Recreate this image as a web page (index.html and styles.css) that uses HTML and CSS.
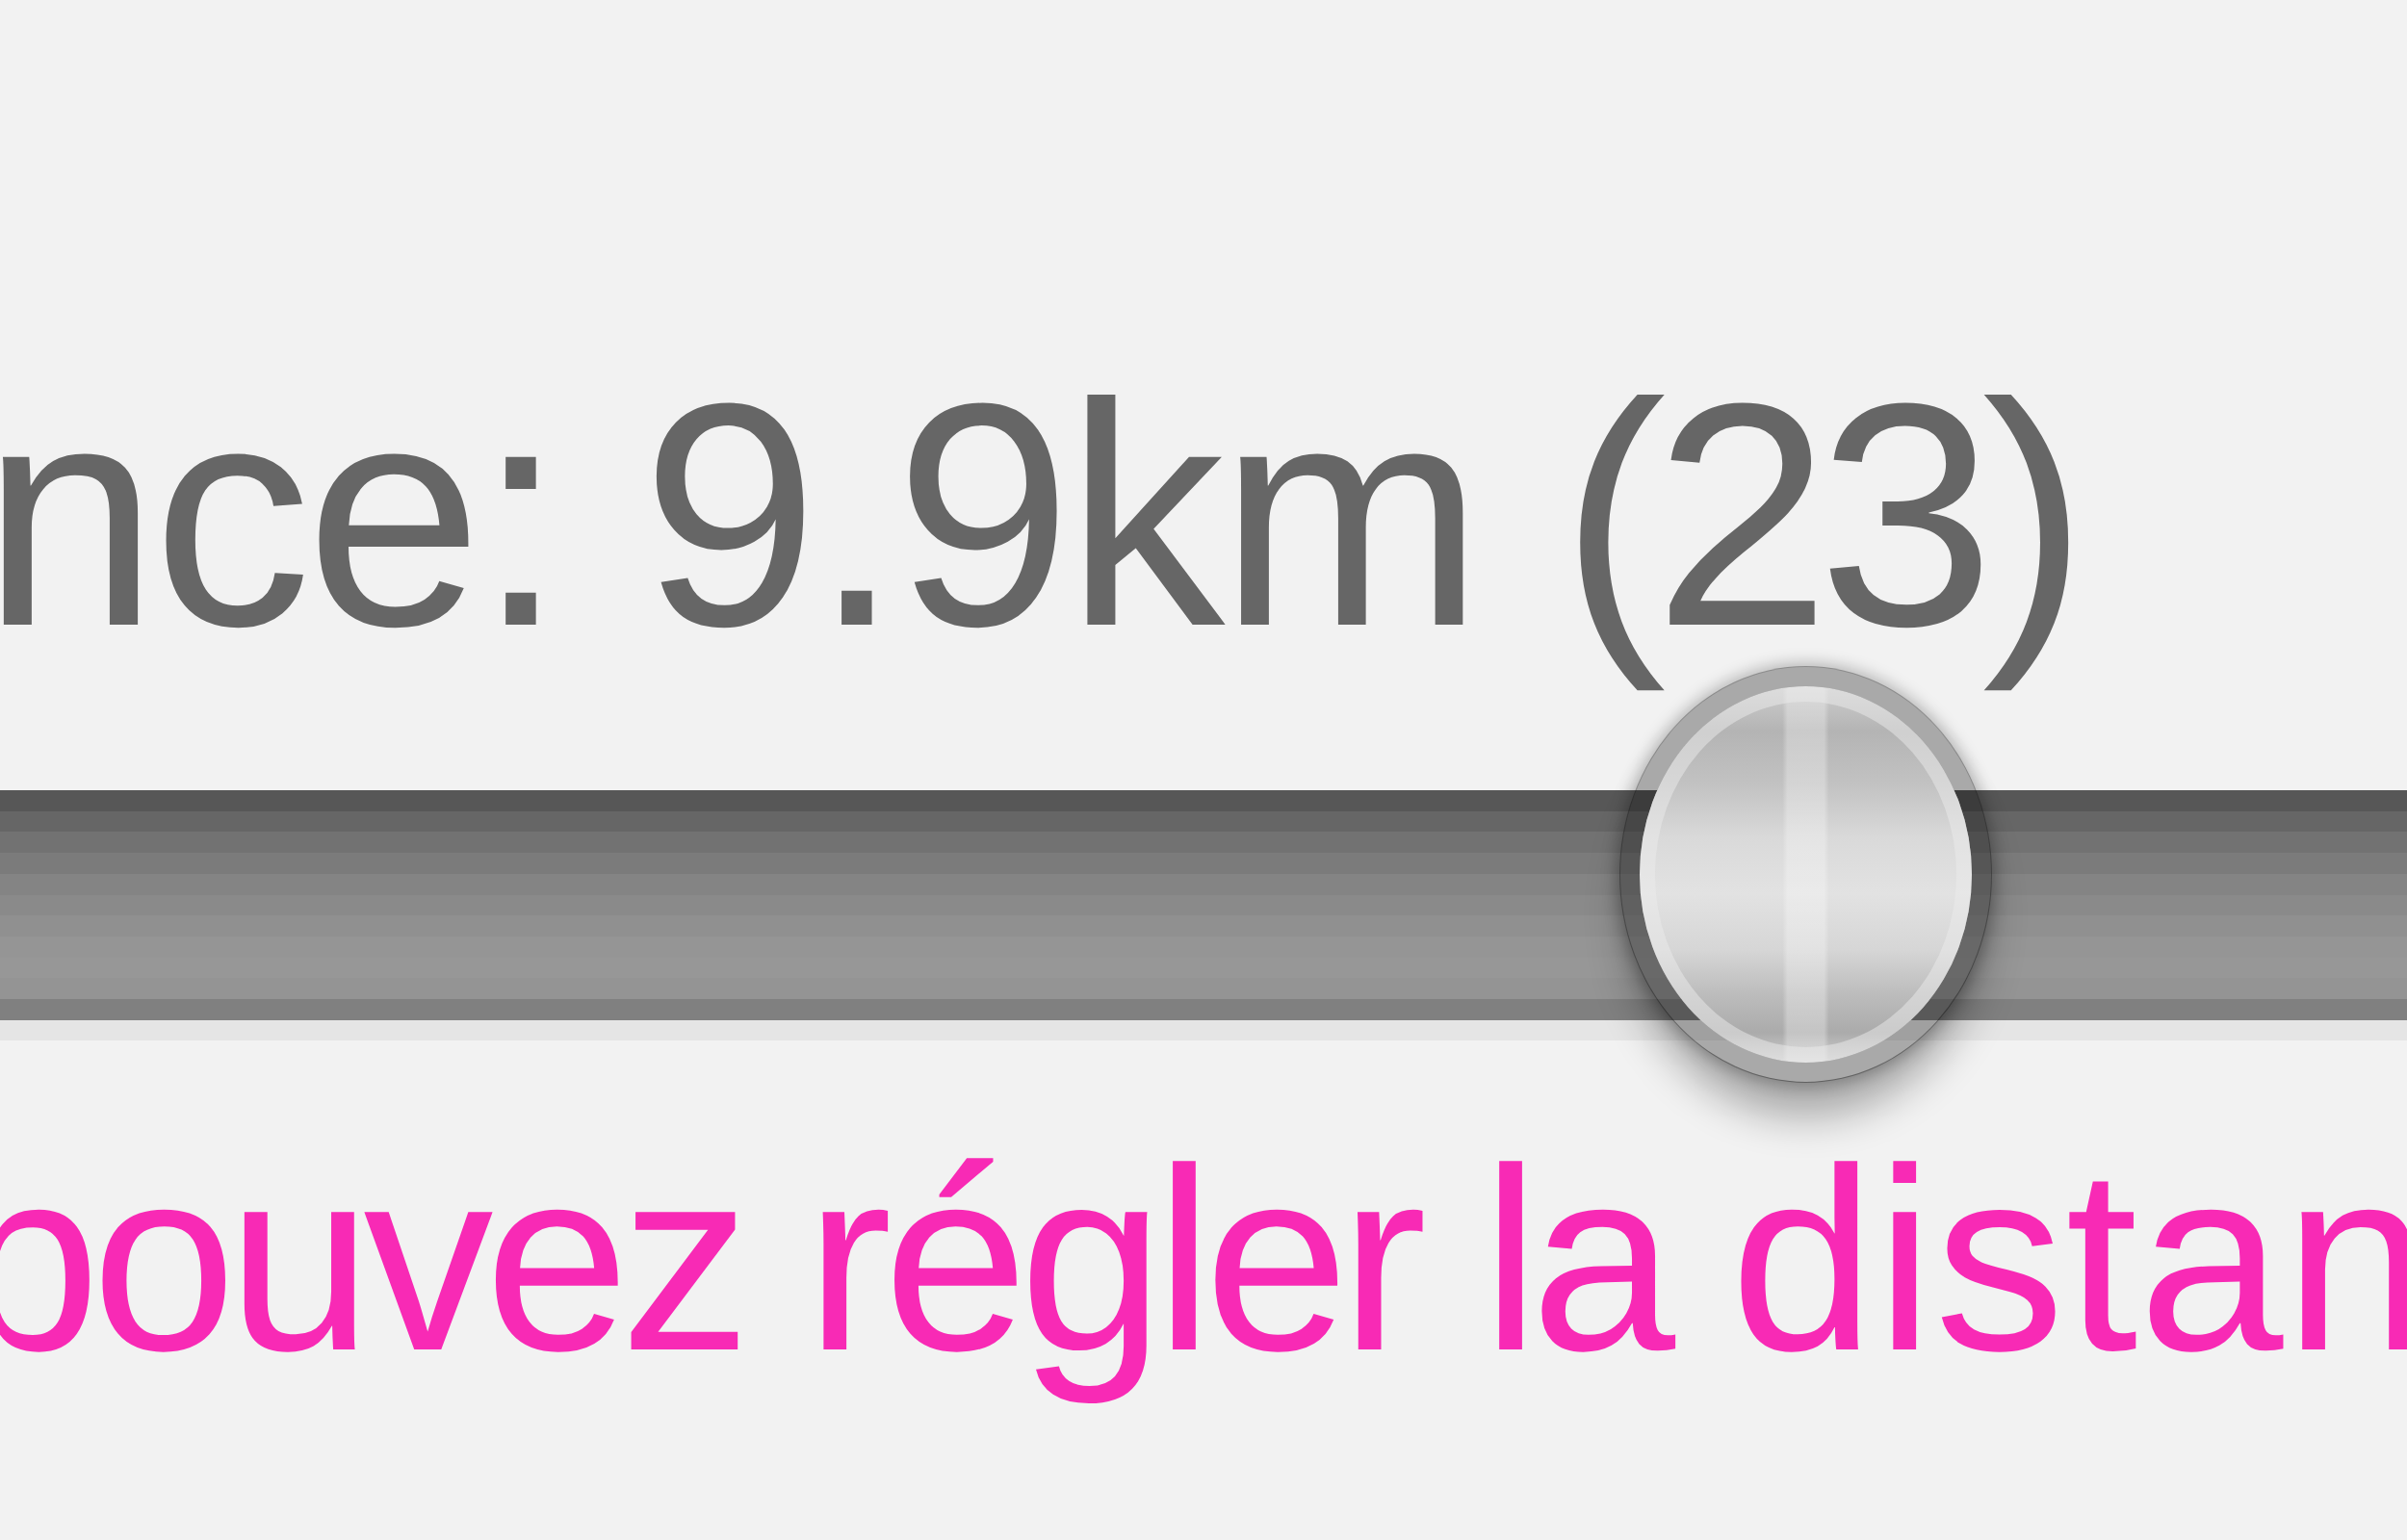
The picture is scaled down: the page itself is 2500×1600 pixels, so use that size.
FILE: index.html
```html
<!DOCTYPE html>
<html lang="fr">
<head>
<meta charset="utf-8">
<title>Distance</title>
<link rel="stylesheet" href="styles.css">
</head>
<body>
<div class="zoom">
  <div class="label">nce: 9.9km <span class="count">(23)</span></div>
  <div class="slider">
    <div class="thumb"></div>
  </div>
  <div class="hint">pouvez régler la <span class="wide">distan</span></div>
</div>
</body>
</html>
```
FILE: styles.css
```css
html, body {
  margin: 0;
  padding: 0;
}
body {
  width: 2500px;
  height: 1600px;
  overflow: hidden;
  background: #f2f2f2;
  font-family: "Liberation Sans", Arial, sans-serif;
}
.zoom {
  display: flex;
  flex-direction: column;
  width: 2500px;
  height: 1600px;
  overflow: hidden;
}
.label {
  margin: 370px 0 0 -19px;
  font-size: 330px;
  line-height: 330px;
  letter-spacing: -6px;
  color: #666;
  white-space: nowrap;
}
.count {
  letter-spacing: -13px;
}
.slider {
  position: relative;
  margin-top: 121px;
  height: 239px;
  border-bottom: 21px solid #e5e5e5;
  background: linear-gradient(180deg,
    #575757 0, #575757 21.7px,
    #666666 21.7px, #666666 43.4px,
    #727272 43.4px, #727272 65.1px,
    #7b7b7b 65.1px, #7b7b7b 86.8px,
    #848484 86.8px, #848484 108.5px,
    #8a8a8a 108.5px, #8a8a8a 130.2px,
    #909090 130.2px, #909090 151.9px,
    #959595 151.9px, #959595 173.6px,
    #979797 173.6px, #979797 195.3px,
    #949494 195.3px, #949494 217px,
    #808080 217px, #808080 239px);
}
.thumb {
  position: absolute;
  left: 1682px;
  top: -129px;
  width: 387px;
  height: 433px;
  box-sizing: border-box;
  border-radius: 50%;
  border: 21px solid rgba(0, 0, 0, 0.3);
  background-clip: padding-box;
  background-color: #d8d8d8;
  background-image:
    linear-gradient(90deg, transparent 43%, rgba(255,255,255,0.3) 44.5%, rgba(255,255,255,0.3) 55.5%, transparent 57%),
    linear-gradient(180deg, #cdcdcd 0%, #b4b4b4 12%, #c2c2c2 26%, #d9d9d9 40%, #e2e2e2 55%, #d6d6d6 70%, #bcbcbc 82%, #ababab 92%, #cfcfcf 100%);
  box-shadow:
    inset 0 0 0 16px rgba(235,235,235,0.5),
    0 0 16px 3px rgba(0,0,0,0.26),
    0 42px 44px -8px rgba(0,0,0,0.32);
}
.hint {
  margin: 93px 0 0 -46px;
  font-size: 270px;
  line-height: 270px;
  letter-spacing: -9px;
  color: #f82ab5;
  white-space: nowrap;
}
.wide {
  letter-spacing: 1px;
}
```
